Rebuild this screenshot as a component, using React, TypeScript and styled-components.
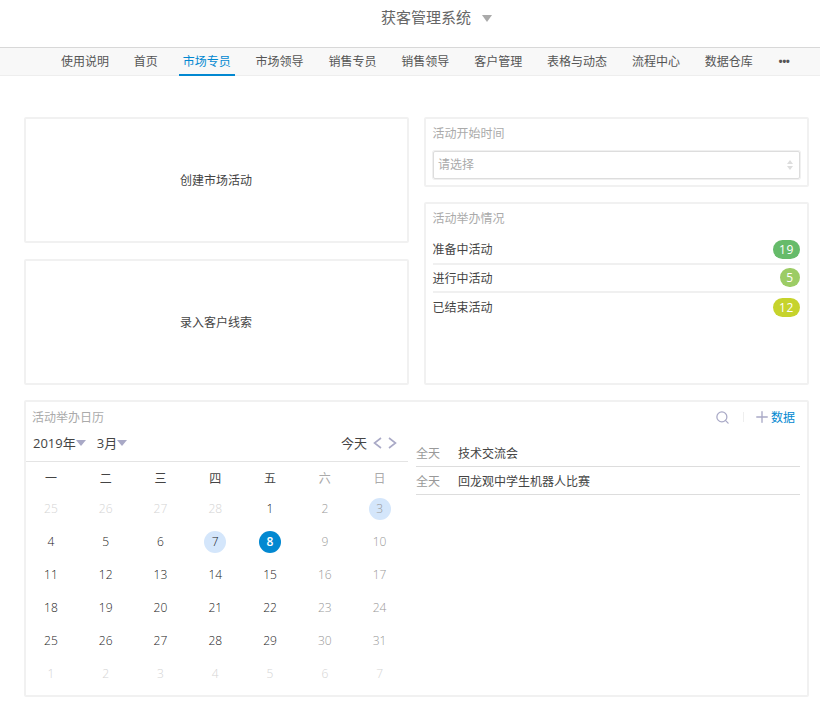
import React from 'react';
import styled, { createGlobalStyle } from 'styled-components';
import { Search, Plus } from 'lucide-react';

const GlobalStyle = createGlobalStyle`
  * { box-sizing: border-box; }
  html, body { margin: 0; padding: 0; background: #ffffff; }
  body {
    font-family: "Open Sans", "Noto Sans CJK SC", sans-serif;
    font-size: 12px;
    color: #333333;
    overflow: hidden;
  }
`;

const navItems = ['使用说明', '首页', '市场专员', '市场领导', '销售专员', '销售领导', '客户管理', '表格与动态', '流程中心', '数据仓库'];
const stats = [
  { name: '准备中活动', count: 19, color: '#66bb6a' },
  { name: '进行中活动', count: 5, color: '#9ccc65' },
  { name: '已结束活动', count: 12, color: '#c6d32c' },
];
const weekDays = ['一', '二', '三', '四', '五', '六', '日'];
const events = ['技术交流会', '回龙观中学生机器人比赛'];

type Day = { n: number; muted?: boolean; mark?: 'light' | 'active' };
const days: Day[] = [
  ...[25, 26, 27, 28].map((n) => ({ n, muted: true })),
  ...Array.from({ length: 31 }, (_, i) => {
    const n = i + 1;
    if (n === 3 || n === 7) return { n, mark: 'light' as const };
    if (n === 8) return { n, mark: 'active' as const };
    return { n };
  }),
  ...[1, 2, 3, 4, 5, 6, 7].map((n) => ({ n, muted: true })),
];

function Chevron({ dir }: { dir: 'left' | 'right' }) {
  return (
    <svg width="9" height="12" viewBox="0 0 9 12" fill="none" stroke="#a9a9c6" strokeWidth="1.6">
      <path d={dir === 'left' ? 'M8 1L1.5 6L8 11' : 'M1 1L7.5 6L1 11'} />
    </svg>
  );
}

function App() {
  return (
    <Page>
      <GlobalStyle />
      <TitleBar>
        <AppTitle>获客管理系统</AppTitle>
        <TitleCaret />
      </TitleBar>
      <NavBar>
        {navItems.map((item) => (
          <NavItem key={item} $active={item === '市场专员'}>{item}</NavItem>
        ))}
        <NavMore>•••</NavMore>
      </NavBar>
      <Content>
        <TopGrid>
          <LeftColumn>
            <ActionCard>创建市场活动</ActionCard>
            <ActionCard>录入客户线索</ActionCard>
          </LeftColumn>
          <RightColumn>
            <FilterCard>
              <CardTitle>活动开始时间</CardTitle>
              <SelectBox>
                请选择
                <SelectArrows>
                  <ArrowUp />
                  <ArrowDown />
                </SelectArrows>
              </SelectBox>
            </FilterCard>
            <StatsCard>
              <CardTitle>活动举办情况</CardTitle>
              <StatList>
                {stats.map((s) => (
                  <StatRow key={s.name}>
                    <span>{s.name}</span>
                    <Badge $color={s.color}>{s.count}</Badge>
                  </StatRow>
                ))}
              </StatList>
            </StatsCard>
          </RightColumn>
        </TopGrid>
        <CalendarCard>
          <CalendarPane>
            <CalendarTitle>活动举办日历</CalendarTitle>
            <CalendarToolbar>
              <DateSelect>2019年<SmallCaret /></DateSelect>
              <DateSelect>3月<SmallCaret /></DateSelect>
              <TodayGroup>
                今天
                <Chevron dir="left" />
                <Chevron dir="right" />
              </TodayGroup>
            </CalendarToolbar>
            <WeekRow>
              {weekDays.map((d, i) => (
                <WeekCell key={d} $weekend={i > 4}>{d}</WeekCell>
              ))}
            </WeekRow>
            <DayGrid>
              {days.map((d, i) => (
                <DayCell key={i}>
                  <DayNumber $muted={d.muted} $weekend={i % 7 > 4} $mark={d.mark}>{d.n}</DayNumber>
                </DayCell>
              ))}
            </DayGrid>
          </CalendarPane>
          <EventPane>
            <EventTools>
              <Search size={15} strokeWidth={2} color="#a9a9c6" />
              <ToolDivider />
              <AddData>
                <Plus size={18} strokeWidth={1.8} color="#a9a9c6" />
                数据
              </AddData>
            </EventTools>
            {events.map((e) => (
              <EventRow key={e}>
                <EventTime>全天</EventTime>
                <span>{e}</span>
              </EventRow>
            ))}
          </EventPane>
        </CalendarCard>
      </Content>
    </Page>
  );
}

export default App;

const Page = styled.div`
  width: 820px;
  height: 704px;
  overflow: hidden;
`;

const TitleBar = styled.div`
  height: 47px;
  padding: 7px 0 0 381px;
  display: flex;
  align-items: flex-start;
  gap: 11px;
`;

const AppTitle = styled.div`
  font-size: 15px;
  line-height: 21px;
  color: #666666;
`;

const TitleCaret = styled.div`
  margin-top: 8px;
  border-left: 5px solid transparent;
  border-right: 5px solid transparent;
  border-top: 7px solid #aaaaaa;
`;

const NavBar = styled.div`
  height: 29px;
  display: flex;
  align-items: stretch;
  gap: 16.85px;
  padding-left: 57px;
  background: #f8f8f8;
  border-top: 1px solid #d8d8d8;
  border-bottom: 1px solid #eeeeee;
`;

const NavItem = styled.div<{ $active?: boolean }>`
  padding: 0 4px;
  line-height: 27px;
  white-space: nowrap;
  color: ${(p) => (p.$active ? '#0288d1' : '#555555')};
  border-bottom: 2px solid ${(p) => (p.$active ? '#0288d1' : 'transparent')};
  height: 28px;
`;

const NavMore = styled.div`
  margin-left: 5px;
  font-size: 11px;
  font-weight: 700;
  line-height: 26px;
  letter-spacing: -0.5px;
  color: #555555;
`;

const Content = styled.div`
  padding: 41px 11px 0 24px;
  display: flex;
  flex-direction: column;
  gap: 15px;
`;

const TopGrid = styled.div`
  display: grid;
  grid-template-columns: 385px 385px;
  gap: 15px;
  height: 268px;
`;

const LeftColumn = styled.div`
  display: grid;
  grid-template-rows: 126px 126px;
  gap: 16px;
`;

const RightColumn = styled.div`
  display: flex;
  flex-direction: column;
  gap: 15px;
`;

const Card = styled.div`
  background: #ffffff;
  border: 2px solid #f1f1f1;
  border-radius: 2px;
`;

const ActionCard = styled(Card)`
  display: flex;
  align-items: center;
  justify-content: center;
  padding-right: 1px;
  color: #444444;
`;

const FilterCard = styled(Card)`
  height: 70px;
  padding: 5px 7px 0;
`;

const StatsCard = styled(Card)`
  flex: 1;
  padding: 5px 7px 0;
`;

const CardTitle = styled.div`
  margin-left: -0.5px;
  line-height: 20px;
  color: #aaaaaa;
`;

const SelectBox = styled.div`
  position: relative;
  margin-top: 7px;
  height: 28px;
  line-height: 26px;
  padding-left: 4px;
  color: #aaaaaa;
  border: 1px solid #dddddd;
  border-radius: 2px;
  box-shadow: 0 0 0 1px #f0f0f0;
`;

const SelectArrows = styled.div`
  position: absolute;
  right: 6px;
  top: 8px;
  display: flex;
  flex-direction: column;
  gap: 2px;
`;

const ArrowUp = styled.div`
  border-left: 3px solid transparent;
  border-right: 3px solid transparent;
  border-bottom: 4px solid #dddddd;
`;

const ArrowDown = styled.div`
  border-left: 3px solid transparent;
  border-right: 3px solid transparent;
  border-top: 4px solid #dddddd;
`;

const StatList = styled.div`
  margin: 7px 0 0 -0.5px;
`;

const StatRow = styled.div`
  height: 28.5px;
  display: flex;
  align-items: center;
  justify-content: space-between;
  color: #444444;
  border-bottom: 2px solid #f0f0f0;
  &:last-child {
    border-bottom: none;
  }
`;

const Badge = styled.span<{ $color: string }>`
  min-width: 20px;
  height: 19px;
  padding: 0 6px;
  border-radius: 10px;
  background: ${(p) => p.$color};
  color: #ffffff;
  font-size: 12px;
  line-height: 19px;
  letter-spacing: 0.7px;
  text-align: center;
`;

const CalendarCard = styled(Card)`
  height: 297px;
  display: grid;
  grid-template-columns: 382px 1fr;
`;

const CalendarPane = styled.div`
  min-width: 0;
`;

const CalendarTitle = styled.div`
  padding: 6px 0 0 6px;
  line-height: 20px;
  color: #aaaaaa;
`;

const CalendarToolbar = styled.div`
  height: 34px;
  padding: 0 7px 4px;
  display: flex;
  align-items: center;
  gap: 11px;
  font-size: 13px;
  border-bottom: 1px solid #e4e4e4;
`;

const DateSelect = styled.div`
  display: flex;
  align-items: center;
  color: #444444;
`;

const SmallCaret = styled.span`
  border-left: 5px solid transparent;
  border-right: 5px solid transparent;
  border-top: 6px solid #a9a9c6;
`;

const TodayGroup = styled.div`
  margin-left: auto;
  display: flex;
  align-items: center;
  gap: 6px;
  margin-right: 4px;
  color: #444444;
`;

const WeekRow = styled.div`
  display: grid;
  grid-template-columns: repeat(7, 1fr);
  height: 32px;
  margin: 0 1px 0 -2.5px;
  align-items: center;
`;

const WeekCell = styled.div<{ $weekend?: boolean }>`
  text-align: center;
  color: ${(p) => (p.$weekend ? '#aaaaaa' : '#444444')};
`;

const DayGrid = styled.div`
  display: grid;
  grid-template-columns: repeat(7, 1fr);
  grid-auto-rows: 33px;
  margin: -2px 1px 0 -2.5px;
`;

const DayCell = styled.div`
  display: flex;
  align-items: center;
  justify-content: center;
`;

const markBg = { light: '#d4e6fb', active: '#0288d1' };

const DayNumber = styled.span<{ $muted?: boolean; $weekend?: boolean; $mark?: 'light' | 'active' }>`
  width: 22px;
  height: 22px;
  border-radius: 50%;
  line-height: 22px;
  text-align: center;
  background: ${(p) => (p.$mark ? markBg[p.$mark] : 'transparent')};
  color: ${(p) => {
    if (p.$mark === 'active') return '#ffffff';
    if (p.$muted) return '#d4d4d4';
    if (p.$weekend) return '#999999';
    return '#222222';
  }};
  font-weight: ${(p) => (p.$mark === 'active' ? 600 : 300)};
`;

const EventPane = styled.div`
  padding: 0 7px 0 8px;
`;

const EventTools = styled.div`
  height: 37px;
  padding: 0 5px 7px 0;
  display: flex;
  align-items: center;
  justify-content: flex-end;
  gap: 13px;
`;

const ToolDivider = styled.span`
  width: 1px;
  height: 10px;
  background: #eeeeee;
`;

const AddData = styled.div`
  display: flex;
  align-items: center;
  margin-left: -4px;
  color: #0288d1;
`;

const EventRow = styled.div`
  height: 28px;
  display: flex;
  align-items: center;
  color: #444444;
  border-bottom: 1px solid #dddddd;
`;

const EventTime = styled.span`
  width: 42px;
  color: #999999;
`;
